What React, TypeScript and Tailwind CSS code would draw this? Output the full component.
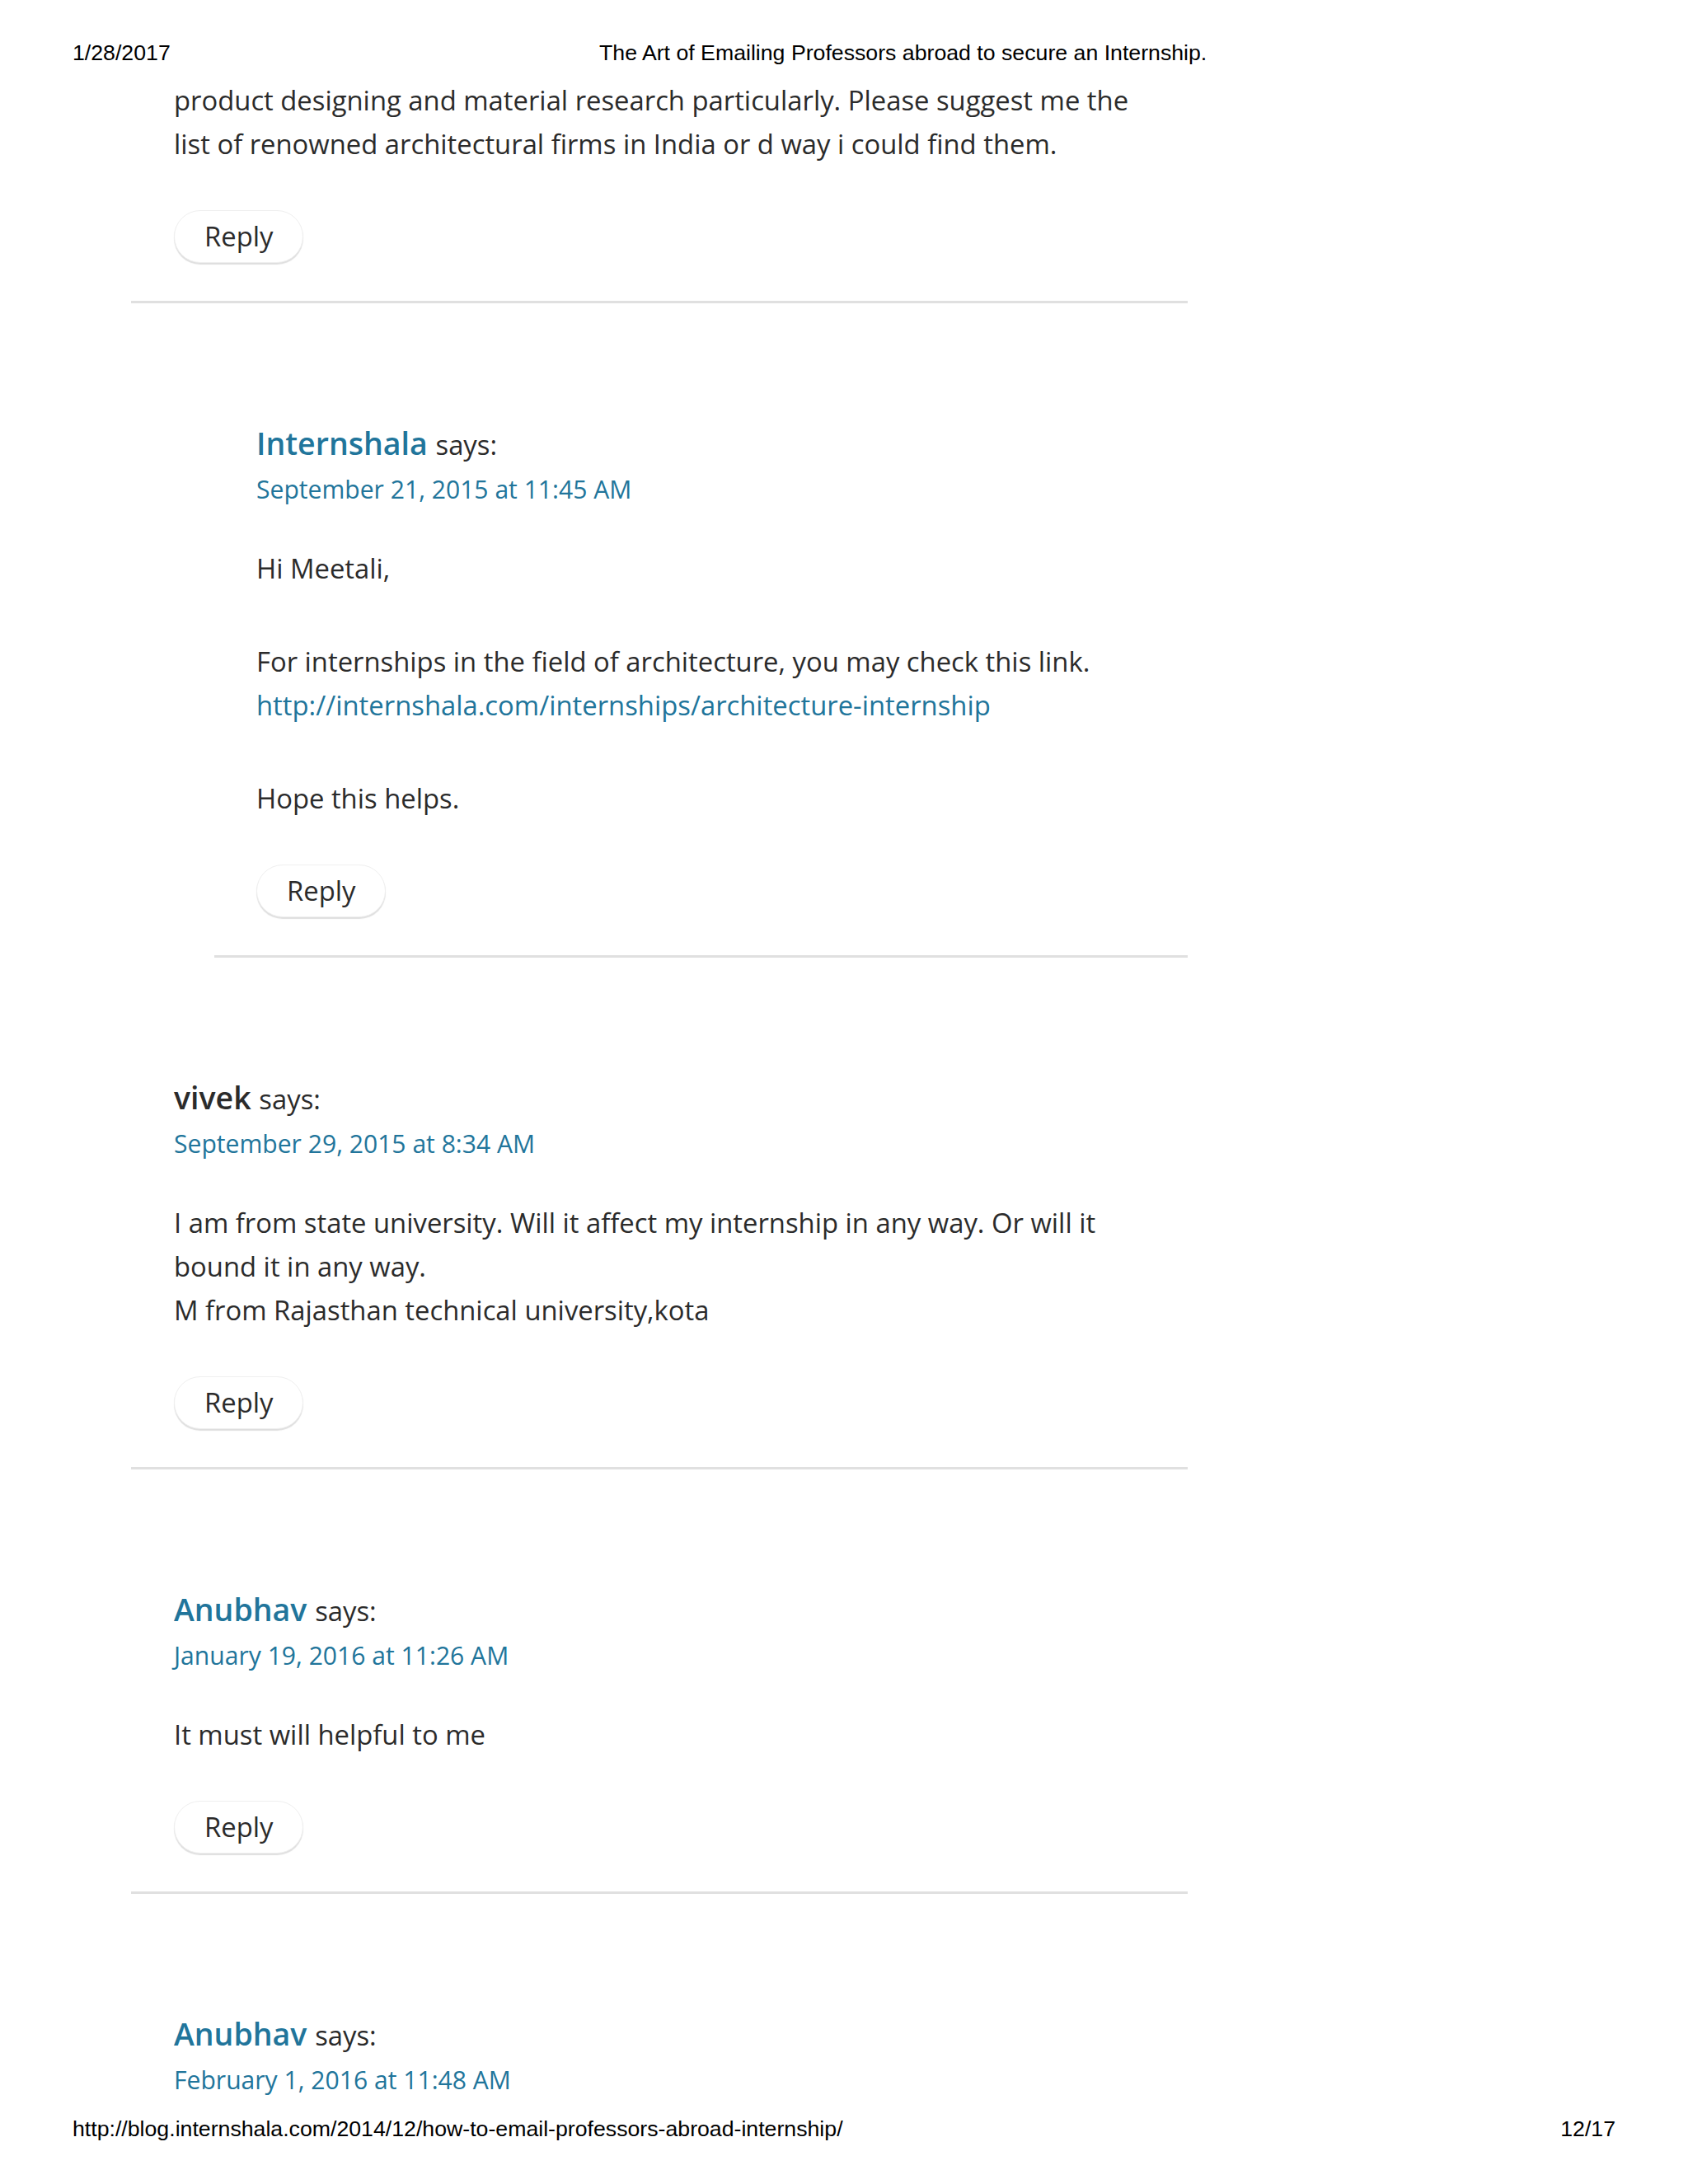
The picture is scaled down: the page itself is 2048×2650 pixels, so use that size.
import React from "react";

const BLUE = "text-[#21759b]";

function ReplyBtn() {
  return (
    <div className="mt-[54px] flex">
      <span className="flex h-[64px] items-center rounded-full border border-[#efefef] bg-white px-[36px] text-[32.8px] leading-none text-[#2b2b2b] shadow-[0_2px_1px_rgba(0,0,0,0.13)]">
        Reply
      </span>
    </div>
  );
}

function Divider() {
  return <div className="h-[3px] bg-[#e0e0e0]" />;
}

function Header({ name, date, link }: { name: string; date: string; link: boolean }) {
  return (
    <>
      <div className="h-[57px] whitespace-nowrap text-[37.5px] leading-[57px]">
        <span className={link ? `font-semibold ${BLUE}` : "font-semibold text-[#2b2b2b]"}>{name}</span>{" "}
        <span className="text-[32.8px] text-[#2b2b2b]">says:</span>
      </div>
      <div className={`h-[57px] whitespace-nowrap text-[30.1px] leading-[56px] ${BLUE}`}>{date}</div>
    </>
  );
}

export default function App() {
  return (
    <div className="relative h-[2650px] w-[2048px] overflow-hidden bg-white font-['Open_Sans',sans-serif] text-[#2b2b2b]">
      {/* print header */}
      <div className="flex h-[95px] pl-[88px] pt-[49px] font-['Liberation_Sans',Arial,sans-serif] text-[26.7px] leading-[30px] text-black">
        <div className="w-[639px]">1/28/2017</div>
        <div>The Art of Emailing Professors abroad to secure an Internship.</div>
      </div>

      {/* content */}
      <div className="h-[2473px] overflow-hidden pl-[159px]">
        <div className="w-[1282px]">
          {/* continued comment */}
          <div className="pl-[52px]">
            <p className="whitespace-nowrap text-[32.8px] leading-[53px]">
              product designing and material research particularly. Please suggest me the
              <br />
              list of renowned architectural firms in India or d way i could find them.
            </p>
            <ReplyBtn />
            <div className="h-[46px]" />
          </div>
          <Divider />

          {/* nested reply */}
          <div className="ml-[101px]">
            <div className="pl-[51px] pt-[141px]">
              <Header name="Internshala" date="September 21, 2015 at 11:45 AM" link />
              <div className="mt-[40px] whitespace-nowrap text-[32.8px] leading-[53px]">
                <p>Hi Meetali,</p>
                <p className="mt-[60px]">
                  For internships in the field of architecture, you may check this link.
                  <br />
                  <span className={BLUE}>http://internshala.com/internships/architecture-internship</span>
                </p>
                <p className="mt-[60px]">Hope this helps.</p>
              </div>
              <ReplyBtn />
              <div className="h-[46px]" />
            </div>
            <Divider />
          </div>

          {/* vivek */}
          <div className="pl-[52px] pt-[141px]">
            <Header name="vivek" date="September 29, 2015 at 8:34 AM" link={false} />
            <div className="mt-[40px] whitespace-nowrap text-[32.8px] leading-[53px]">
              <p>
                I am from state university. Will it affect my internship in any way. Or will it
                <br />
                bound it in any way.
                <br />
                M from Rajasthan technical university,kota
              </p>
            </div>
            <ReplyBtn />
            <div className="h-[46px]" />
          </div>
          <Divider />

          {/* Anubhav 1 */}
          <div className="pl-[52px] pt-[141px]">
            <Header name="Anubhav" date="January 19, 2016 at 11:26 AM" link />
            <div className="mt-[40px] whitespace-nowrap text-[32.8px] leading-[53px]">
              <p>It must will helpful to me</p>
            </div>
            <ReplyBtn />
            <div className="h-[46px]" />
          </div>
          <Divider />

          {/* Anubhav 2 */}
          <div className="pl-[52px] pt-[141px]">
            <Header name="Anubhav" date="February 1, 2016 at 11:48 AM" link />
          </div>
        </div>
      </div>

      {/* print footer */}
      <div className="flex justify-between px-[88px] font-['Liberation_Sans',Arial,sans-serif] text-[26.7px] leading-[30px] text-black">
        <div>http://blog.internshala.com/2014/12/how-to-email-professors-abroad-internship/</div>
        <div>12/17</div>
      </div>
    </div>
  );
}
